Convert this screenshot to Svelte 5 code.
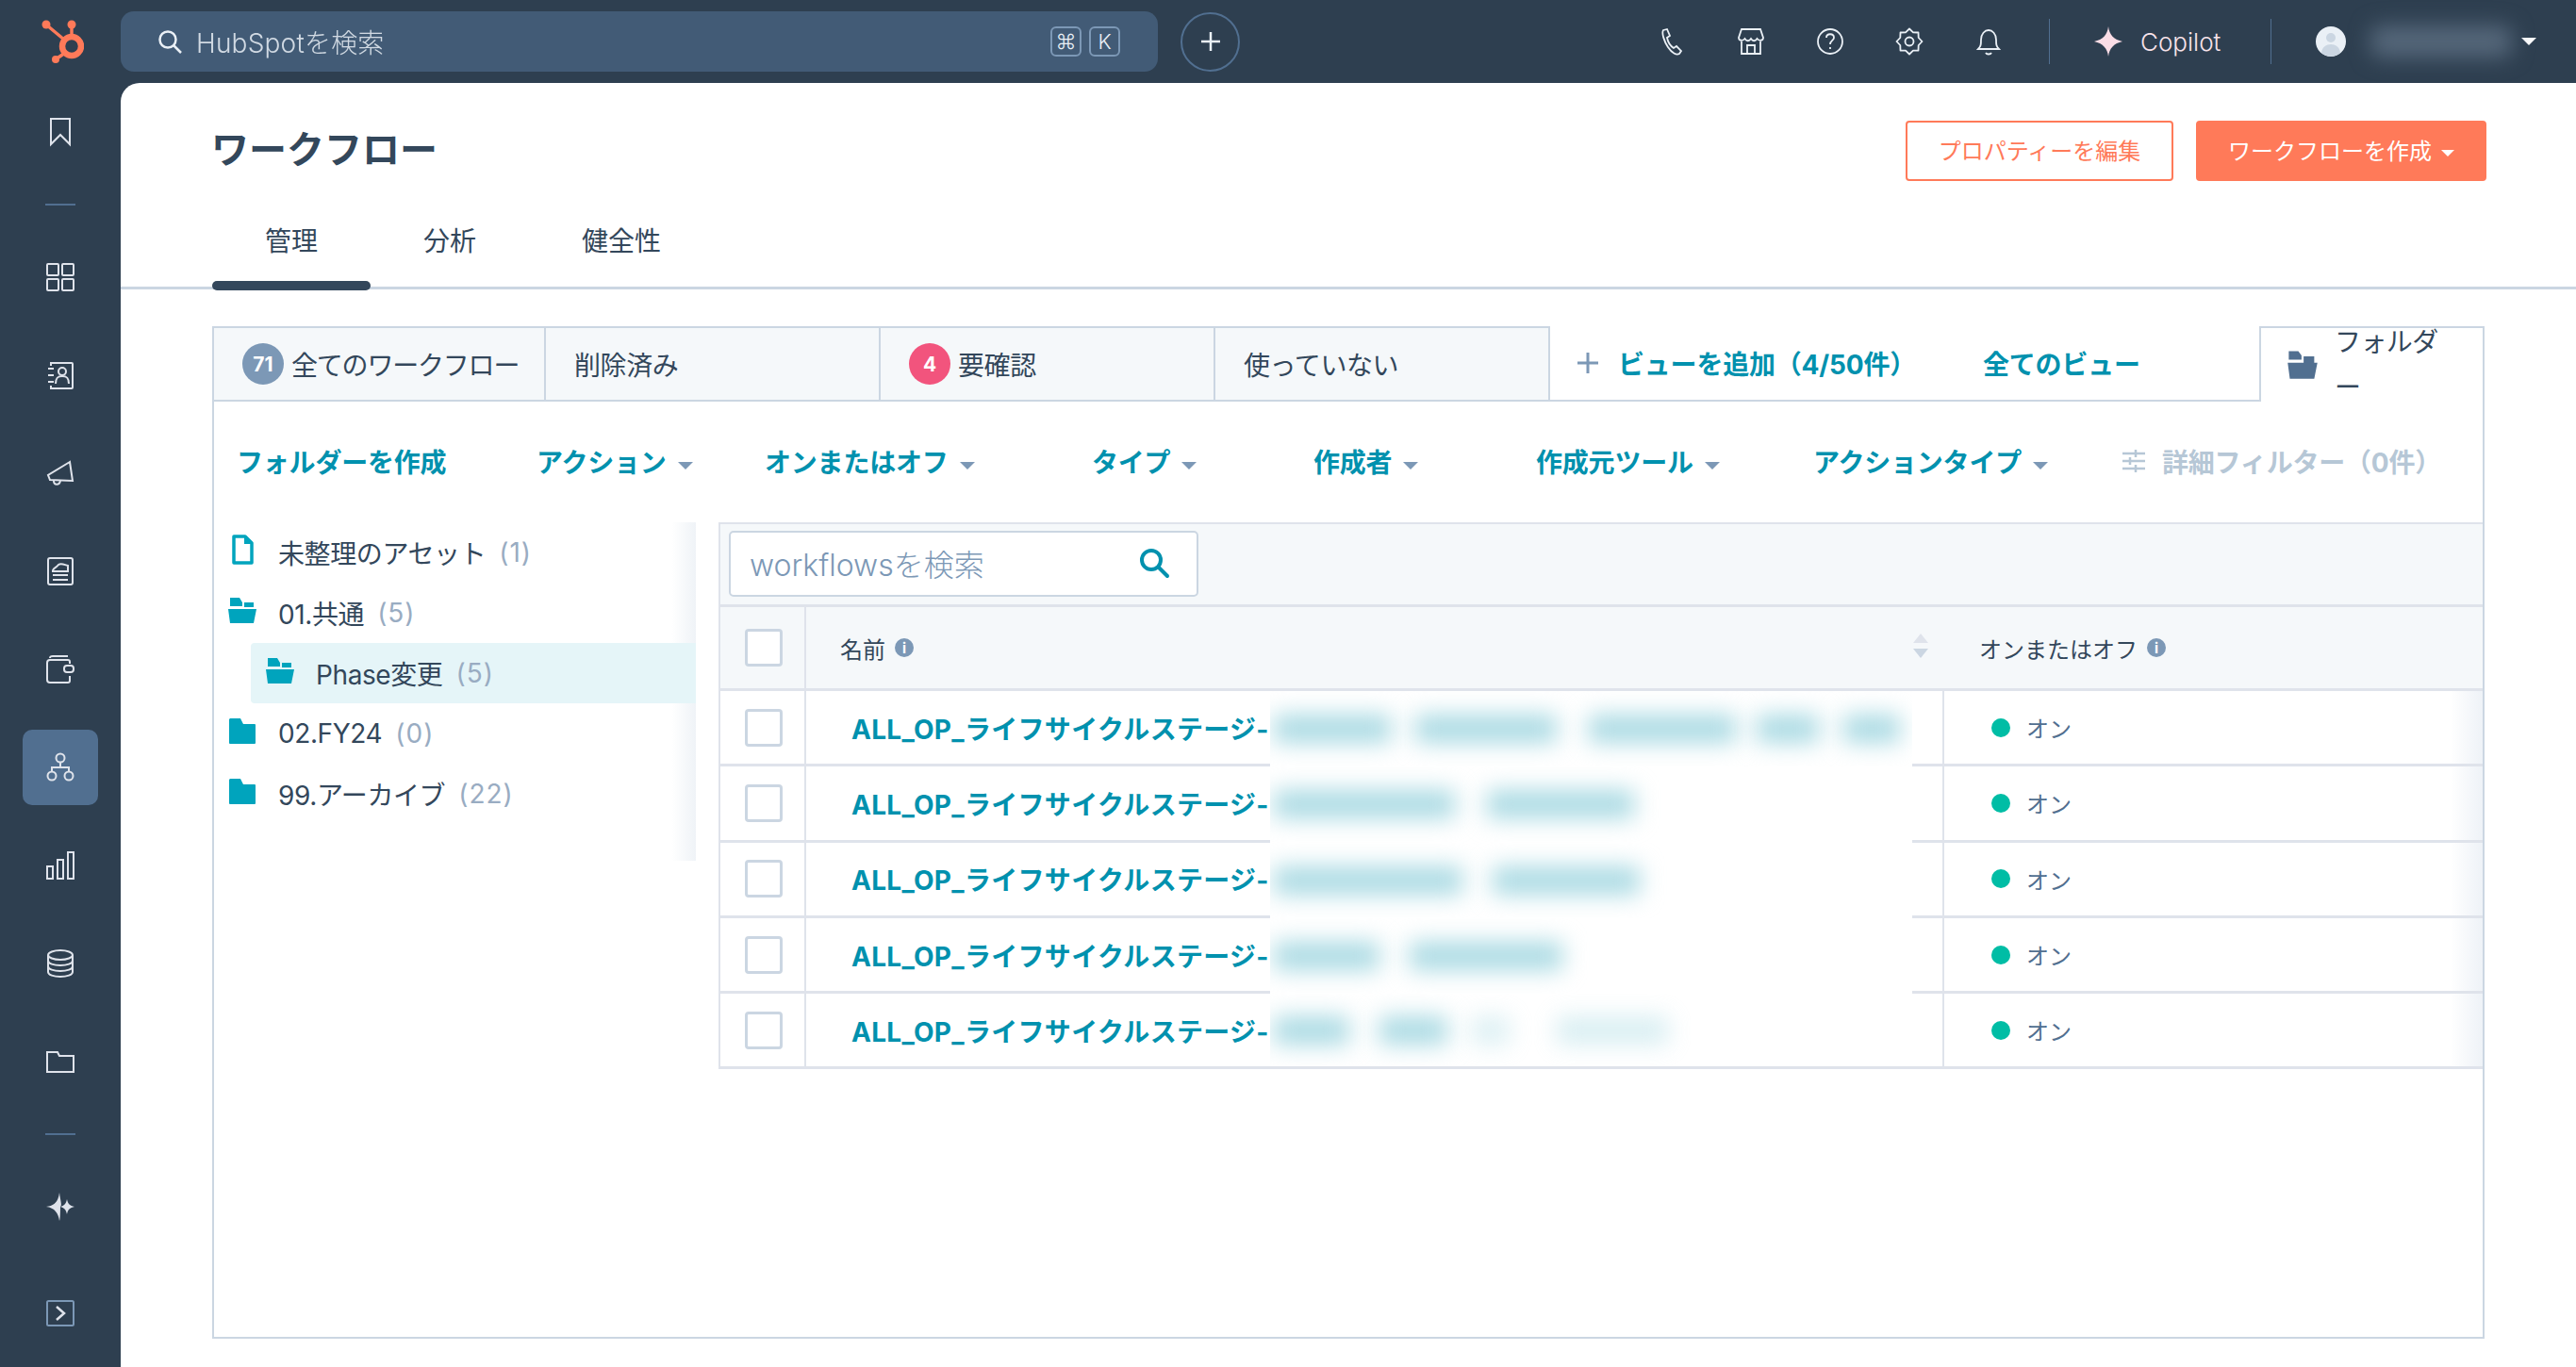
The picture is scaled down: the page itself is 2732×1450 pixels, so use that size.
<script>
	const railTop = ['grid', 'contacts', 'megaphone', 'report', 'wallet', 'workflow', 'bars', 'database', 'folder'];

	// rough gear outline for the settings icon
	function gear() {
		let d = '';
		for (let i = 0; i < 16; i++) {
			const a = (i / 16) * Math.PI * 2;
			const r = i % 2 ? 10.5 : 13.5;
			const x = (16 + r * Math.cos(a)).toFixed(1);
			const y = (16 + r * Math.sin(a)).toFixed(1);
			d += (i ? 'L' : 'M') + x + ' ' + y;
		}
		return d + 'Z';
	}

	const filters = ['アクション', 'オンまたはオフ', 'タイプ', '作成者', '作成元ツール', 'アクションタイプ'];

	const tree = [
		{ label: '未整理のアセット', count: 1, icon: 'file' },
		{ label: '01.共通', count: 5, icon: 'open' },
		{ label: 'Phase変更', count: 5, icon: 'open', active: true },
		{ label: '02.FY24', count: 0, icon: 'closed' },
		{ label: '99.アーカイブ', count: 22, icon: 'closed' }
	];

	// hidden part of each workflow name: blurred chunks [gap, width, opacity]
	const rows = [
		[[4, 124, 1], [26, 150, 1], [34, 156, 1], [22, 66, 1], [26, 60, 1]],
		[[4, 192, 1], [34, 156, 1]],
		[[4, 200, 1], [32, 156, 1]],
		[[4, 112, 1], [32, 162, 1]],
		[[4, 80, 1], [32, 72, 1], [26, 40, 0.4], [50, 118, 0.45]]
	];
</script>

<div class="app">
	<aside class="rail">
		<div class="logo">
			<svg width="46" height="46" viewBox="0 0 46 46" fill="#ff7a59" stroke="#ff7a59">
				<circle cx="33" cy="28" r="10" fill="none" stroke-width="6.5" />
				<path d="M7 6 25 21M33 6v13M26 35 16 42" stroke-width="3.4" fill="none" />
				<circle cx="6" cy="5" r="4.5" stroke="none" />
				<circle cx="33" cy="5" r="4.5" stroke="none" />
				<circle cx="16" cy="42" r="4" stroke="none" />
			</svg>
		</div>
		<div class="rail-item bookmark">
			<svg width="32" height="32" viewBox="0 0 32 32"><path d="M6 2h20v27l-10-10-10 10z" /></svg>
		</div>
		<div class="rail-sep"></div>
		<div class="rail-group">
			{#each railTop as name}
				<div class="rail-item" class:active={name === 'workflow'}>
					<svg width="32" height="32" viewBox="0 0 32 32">
						{#if name === 'grid'}
							<rect x="2" y="2" width="12" height="12" rx="1" /><rect x="18" y="2" width="12" height="12" rx="1" />
							<rect x="2" y="18" width="12" height="12" rx="1" /><rect x="18" y="18" width="12" height="12" rx="1" />
						{:else if name === 'contacts'}
							<path d="M6 6V3h22a1 1 0 0 1 1 1v25a1 1 0 0 1-1 1H6v-3" />
							<path d="M3 9h6M3 16h6M3 23h6" />
							<circle cx="18" cy="12" r="4" /><path d="M11 25c0-7 3-8 7-8s7 1 7 8" />
						{:else if name === 'megaphone'}
							<path d="M26 4 3 18l2 5 24 1z" /><path d="M9 24c0 5 6 5 7 0" />
						{:else if name === 'report'}
							<rect x="3" y="2" width="26" height="28" rx="2" />
							<path d="M8 15c1-3 4-3 6-6 3-2 6 0 10 1v6H8zM8 20h16M8 25h16" />
						{:else if name === 'wallet'}
							<path d="M5 4c0-2 1-2 3-2h16" /><path d="M26 10V8a2 2 0 0 0-2-2H5a3 3 0 0 0-3 3v18a3 3 0 0 0 3 3h19a2 2 0 0 0 2-2v-5" />
							<rect x="20" y="12" width="10" height="7" rx="3" />
						{:else if name === 'workflow'}
							<circle cx="16" cy="6" r="4.5" /><circle cx="7" cy="25" r="4.5" /><circle cx="25" cy="25" r="4.5" />
							<path d="M16 10v6M7 20v-4h18v4" />
						{:else if name === 'bars'}
							<rect x="2" y="17" width="6" height="13" /><rect x="13" y="10" width="6" height="20" /><rect x="24" y="2" width="6" height="28" />
						{:else if name === 'database'}
							<ellipse cx="16" cy="7" rx="13" ry="5" /><path d="M3 7v18c0 3 6 5 13 5s13-2 13-5V7" />
							<path d="M3 13c0 3 6 5 13 5s13-2 13-5M3 19c0 3 6 5 13 5s13-2 13-5" />
						{:else}
							<path d="M2 6h11l2 4h15v17H2z" />
						{/if}
					</svg>
				</div>
			{/each}
		</div>
		<div class="rail-sep"></div>
		<div class="rail-item">
			<svg width="32" height="32" viewBox="0 0 32 32" class="solid">
				<path d="M15 1c1 9 3 13 1 15 0 0 0 14-1 15-1-8-5-14-14-15 9-1 13-6 14-15z" />
				<path d="M23 8c1 5 3 7 8 8-5 1-7 3-8 8-1-5-3-7-7-8 4-1 6-3 7-8z" />
			</svg>
		</div>
		<div class="rail-item expand">
			<svg width="32" height="32" viewBox="0 0 32 32">
				<rect x="2" y="2" width="28" height="26" rx="1.5" class="frame" />
				<path d="M12 8l8 7-8 7" />
			</svg>
		</div>
	</aside>

	<div class="right">
		<header class="topbar">
			<div class="search">
				<svg width="28" height="28" viewBox="0 0 28 28" class="line"><circle cx="12" cy="12" r="8.5" /><path d="M18 18l8 8" /></svg>
				<span class="search-text">HubSpotを検索</span>
				<span class="kbd">⌘</span>
				<span class="kbd">K</span>
			</div>
			<button class="plus" aria-label="追加">
				<svg width="26" height="26" viewBox="0 0 26 26" class="line"><path d="M13 3v20M3 13h20" /></svg>
			</button>
			<div class="top-icons">
				<svg width="32" height="32" viewBox="0 0 32 32" class="line thin"><path d="M7 4l4-1 3 7-3 2c1 5 4 9 7 11l3-2 5 5-2 3c-3 2-8-1-12-7S5 7 7 4z" /></svg>
				<svg width="32" height="32" viewBox="0 0 32 32" class="line thin"><path d="M6 3h20l3 9c0 3-4 4-6.5 1-2 3-4.500 3-6.500 0-2 3-4.500 3-6.500 0-2.500 3-6.500 2-6.500-1zM6 16v13h20V16M12 29v-9h8v9" /></svg>
				<svg width="32" height="32" viewBox="0 0 32 32" class="line thin"><circle cx="16" cy="16" r="13" /><path d="M12 12c0-5 8-5 8 0 0 3-4 3-4 7M16 22v2" /></svg>
				<svg width="32" height="32" viewBox="0 0 32 32" class="line thin"><path d={gear()} stroke-linejoin="round" /><circle cx="16" cy="16" r="4.500" /></svg>
				<svg width="32" height="32" viewBox="0 0 32 32" class="line thin"><path d="M5 24c3-3 3-5 3-10 0-6 4-10 8-10s8 4 8 10c0 5 0 7 3 10zM13 28c1 2 5 2 6 0" /></svg>
			</div>
			<div class="top-sep"></div>
			<div class="copilot">
				<svg width="32" height="32" viewBox="0 0 32 32"><path d="M16 0c1 9 6 14 15 16-9 2-14 7-15 16-1-9-6-14-15-16 9-2 14-7 15-16z" fill="#fbdde6" /></svg>
				<span>Copilot</span>
			</div>
			<div class="top-sep"></div>
			<div class="account">
				<svg width="32" height="32" viewBox="0 0 32 32">
					<circle cx="16" cy="16" r="16" fill="#eaf0f6" /><circle cx="16" cy="12" r="5" fill="#cbd6e2" /><path d="M6 28c1-12 19-12 20 0-5 5-15 5-20 0z" fill="#cbd6e2" />
				</svg>
				<div class="blur-name"></div>
				<span class="caret white"></span>
			</div>
		</header>

		<main class="main">
			<div class="head">
				<h1>ワークフロー</h1>
				<div class="head-actions">
					<button class="btn outline">プロパティーを編集</button>
					<button class="btn solid-btn">ワークフローを作成<span class="caret white small"></span></button>
				</div>
			</div>
			<nav class="tabs">
				<span class="tab current">管理</span>
				<span class="tab">分析</span>
				<span class="tab">健全性</span>
			</nav>

			<section class="box">
				<div class="views">
					<div class="vtab"><span class="badge grey">71</span><span class="tight">全てのワークフロー</span></div>
					<div class="vtab">削除済み</div>
					<div class="vtab"><span class="badge red">4</span>要確認</div>
					<div class="vtab">使っていない</div>
					<div class="view-links">
						<svg width="24" height="24" viewBox="0 0 24 24" class="add-plus"><path d="M12 1v22M1 12h22" /></svg>
						<span class="link add-view">ビューを追加（4/50件）</span>
						<span class="link all-views">全てのビュー</span>
					</div>
					<div class="folder-tab">
						<svg width="36" height="36" viewBox="0 0 32 32" fill="#516f90"><path d="M3 11V3h9l3 4v4zM17 8h10v6H17zM2 14h28l-3 15H4z" /></svg>
						<span class="folder-label">フォルダー</span>
					</div>
				</div>

				<div class="panel">
					<div class="filters">
						<span class="link">フォルダーを作成</span>
						{#each filters as f}
							<span class="link">{f}<span class="caret"></span></span>
						{/each}
						<span class="adv">
							<svg width="28" height="28" viewBox="0 0 28 28"><path d="M2 6h24M2 14h24M2 22h24" /><path d="M16 2v8M10 10v8M16 18v8" /></svg>
							詳細フィルター（0件）
						</span>
					</div>

					<div class="content">
						<div class="tree">
							{#each tree as item}
								<div class="node" class:active={item.active}>
									<svg width="32" height="32" viewBox="0 0 32 32" fill="#00a4bd">
										{#if item.icon === 'file'}
											<path d="M7 2h12l7 7v21H7z" fill="none" stroke="#00a4bd" stroke-width="3.500" stroke-linejoin="round" /><path d="M18 2l8 8h-8z" />
										{:else if item.icon === 'open'}
											<path d="M3 12V3h10l3 5v4zM18 8h10v5H18zM1 15h30l-3 15H3z" />
										{:else}
											<path d="M3 3h11l3 6h12a1 1 0 0 1 1 1v19a1 1 0 0 1-1 1H3a1 1 0 0 1-1-1V4z" />
										{/if}
									</svg>
									<span class="node-label">{item.label}</span>
									<span class="count">({item.count})</span>
								</div>
							{/each}
						</div>

						<div class="table">
							<div class="tsearch">
								<div class="tinput">
									<span>workflowsを検索</span>
									<svg width="34" height="34" viewBox="0 0 34 34" fill="none" stroke="#0091ae" stroke-width="4" stroke-linecap="round"><circle cx="14" cy="14" r="10" /><path d="M22 22l9 9" /></svg>
								</div>
							</div>
							<div class="row header">
								<div class="cell check"><span class="box-check"></span></div>
								<div class="cell name-head">
									<span>名前</span><span class="info">i</span>
									<span class="sort"><i class="up"></i><i class="down"></i></span>
								</div>
								<div class="cell status-head"><span>オンまたはオフ</span><span class="info">i</span></div>
							</div>
							{#each rows as chunks, i}
								<div class="row">
									<div class="cell check"><span class="box-check"></span></div>
									<div class="cell name">
										<span class="wf-name">ALL_OP_ライフサイクルステージ-</span>
										<div class="redact" class:last={i === rows.length - 1}>
											{#each chunks as c}
												<i style="margin-left:{c[0]}px;width:{c[1]}px;opacity:{c[2]}"></i>
											{/each}
										</div>
									</div>
									<div class="cell status"><span class="dot"></span>オン</div>
								</div>
							{/each}
						</div>
					</div>
				</div>
			</section>
		</main>
	</div>
</div>

<style>
	:global(body) {
		margin: 0;
		background: #2e3f50;
	}

	.app {
		display: flex;
		width: 2732px;
		height: 1450px;
		overflow: hidden;
		background: #2e3f50;
		font-family: Inter, "Noto Sans CJK JP", sans-serif;
		font-size: 28px;
		color: #33475b;
	}

	.rail {
		width: 128px;
		flex-shrink: 0;
		display: flex;
		flex-direction: column;
		align-items: center;
	}

	.logo {
		height: 88px;
		display: flex;
		align-items: center;
		padding-left: 4px;
		box-sizing: border-box;
	}

	.rail-group {
		display: flex;
		flex-direction: column;
		gap: 24px;
	}

	.rail-item {
		width: 80px;
		height: 80px;
		display: flex;
		align-items: center;
		justify-content: center;
		border-radius: 10px;
	}

	.rail-item.bookmark {
		margin-top: 12px;
	}

	.rail-item.active {
		background: #516f90;
	}

	.rail-item svg {
		fill: none;
		stroke: #dfe3eb;
		stroke-width: 2;
	}

	.rail-item svg.solid {
		fill: #dfe3eb;
		stroke: none;
	}

	.rail-item.expand {
		margin-top: 34px;
	}

	.rail-item.expand .frame {
		stroke: #7c98b6;
	}

	.rail-item.expand path {
		stroke-width: 2.5;
	}

	.rail-sep {
		height: 74px;
		width: 32px;
		flex-shrink: 0;
		background: linear-gradient(#516f90, #516f90) center / 32px 2px no-repeat;
	}

	.right {
		flex: 1;
		display: flex;
		flex-direction: column;
		min-width: 0;
	}

	.topbar {
		height: 88px;
		flex-shrink: 0;
		display: flex;
		align-items: center;
	}

	.search {
		width: 1100px;
		height: 64px;
		box-sizing: border-box;
		padding: 0 40px 0 38px;
		background: #425b76;
		border-radius: 14px;
		display: flex;
		align-items: center;
		color: #eaf0f6;
		font-weight: 300;
	}

	.search-text {
		margin-left: 14px;
		flex: 1;
		opacity: 0.85;
		letter-spacing: 0.2px;
	}

	.kbd {
		min-width: 33px;
		height: 32px;
		box-sizing: border-box;
		margin-left: 8px;
		border: 2px solid #7c98b6;
		border-radius: 6px;
		display: flex;
		align-items: center;
		justify-content: center;
		font-size: 22px;
	}

	.search svg.line {
		flex-shrink: 0;
	}

	.line {
		fill: none;
		stroke: #eaf0f6;
		stroke-width: 2.5;
	}

	.line.thin {
		stroke-width: 1.8;
	}

	.plus {
		width: 63px;
		height: 63px;
		margin-left: 24px;
		padding: 0;
		border-radius: 50%;
		border: 2px solid #516f90;
		background: none;
		display: flex;
		align-items: center;
		justify-content: center;
	}

	.top-icons {
		margin-left: 442px;
		display: flex;
		gap: 52px;
	}

	.top-sep {
		width: 1px;
		height: 48px;
		background: #516f90;
	}

	.top-icons + .top-sep {
		margin-left: 48px;
	}

	.copilot {
		width: 234px;
		box-sizing: border-box;
		padding-left: 46px;
		display: flex;
		align-items: center;
		gap: 18px;
		color: #f8e3ea;
		font-weight: 300;
		font-size: 26px;
	}

	.account {
		display: flex;
		align-items: center;
		margin-left: 47px;
	}

	.blur-name {
		width: 150px;
		height: 34px;
		margin-left: 26px;
		background: #55677a;
		border-radius: 10px;
		filter: blur(11px);
	}

	.caret {
		display: inline-block;
		width: 0;
		height: 0;
		margin-left: 12px;
		vertical-align: 3px;
		border-left: 8px solid transparent;
		border-right: 8px solid transparent;
		border-top: 8px solid #7c98b6;
	}

	.caret.white {
		border-top-color: #fff;
		margin-left: 10px;
	}

	.caret.small {
		border-left-width: 7px;
		border-right-width: 7px;
		border-top-width: 7px;
	}

	.main {
		flex: 1;
		min-height: 0;
		box-sizing: border-box;
		padding: 40px 97px 30px;
		background: #fff;
		border-top-left-radius: 20px;
		display: flex;
		flex-direction: column;
	}

	.head {
		display: flex;
		justify-content: space-between;
		align-items: center;
		height: 64px;
		flex-shrink: 0;
		margin-right: -2px;
	}

	h1 {
		margin: 0;
		padding-bottom: 8px;
		font-size: 40px;
		font-weight: 700;
		color: #33475b;
		margin-left: -1px;
	}

	.head-actions {
		display: flex;
		gap: 24px;
	}

	.btn {
		height: 64px;
		box-sizing: border-box;
		border-radius: 4px;
		font: inherit;
		font-size: 24px;
		padding: 0 0 4px;
	}

	.btn.outline {
		width: 284px;
		background: #fff;
		border: 2px solid #ff7a59;
		color: #ff7a59;
	}

	.btn.solid-btn {
		width: 308px;
		background: #ff7a59;
		border: 2px solid #ff7a59;
		color: #fff;
	}

	.tabs {
		display: flex;
		margin: 0 -97px;
		padding: 0 97px;
		height: 115px;
		flex-shrink: 0;
		box-sizing: border-box;
		border-bottom: 3px solid #cbd6e2;
	}

	.tab {
		position: relative;
		padding: 11px 56px 0;
		height: 112px;
		display: flex;
		align-items: center;
		box-sizing: border-box;
	}

	.tab.current::after {
		content: "";
		position: absolute;
		left: 0;
		right: 0;
		bottom: -4px;
		height: 10px;
		border-radius: 5px;
		background: #33475b;
	}

	.box {
		flex: 1;
		min-height: 0;
		margin-top: 39px;
		display: flex;
		flex-direction: column;
	}

	.views {
		display: flex;
		height: 80px;
		flex-shrink: 0;
	}

	.vtab {
		width: 355px;
		box-sizing: border-box;
		padding-left: 30px;
		display: flex;
		align-items: center;
		background: #f5f8fa;
		border: 2px solid #cbd6e2;
		border-left: 0;
		letter-spacing: -0.4px;
	}

	.vtab:first-child {
		width: 354px;
		border-left: 2px solid #cbd6e2;
	}

	.tight {
		letter-spacing: -1.2px;
	}

	.badge {
		width: 44px;
		height: 44px;
		flex-shrink: 0;
		margin-right: 8px;
		border-radius: 50%;
		display: flex;
		align-items: center;
		justify-content: center;
		color: #fff;
		font-size: 21px;
		font-weight: 700;
		letter-spacing: 0;
	}

	.badge.grey {
		background: #7c98b6;
	}

	.badge.red {
		background: #f2547d;
	}

	.view-links {
		flex: 1;
		display: flex;
		align-items: center;
		border-bottom: 2px solid #cbd6e2;
		padding-left: 28px;
	}

	.add-plus {
		fill: none;
		stroke: #7c98b6;
		stroke-width: 3;
		margin-right: 20px;
	}

	.link {
		color: #0091ae;
		font-weight: 700;
		letter-spacing: -0.2px;
		white-space: nowrap;
	}

	.all-views {
		margin-left: 71px;
	}

	.folder-tab {
		width: 239px;
		box-sizing: border-box;
		padding-left: 26px;
		display: flex;
		align-items: center;
		gap: 16px;
		background: #fff;
		border: 2px solid #cbd6e2;
		border-bottom: 0;
	}

	.folder-label {
		width: 116px;
		line-height: 48px;
		line-break: anywhere;
		letter-spacing: -0.6px;
	}

	.panel {
		flex: 1;
		min-height: 0;
		border: 2px solid #cbd6e2;
		border-top: 0;
		display: flex;
		flex-direction: column;
	}

	.filters {
		height: 128px;
		flex-shrink: 0;
		box-sizing: border-box;
		padding: 0 0 3px 24px;
		display: grid;
		grid-template-columns: 318px 242px 347px 235px 236px 294px 326px 1fr;
		align-items: center;
	}

	.adv {
		display: flex;
		align-items: center;
		gap: 16px;
		color: #b6c7d6;
		font-weight: 700;
		letter-spacing: -0.2px;
		white-space: nowrap;
	}

	.adv svg {
		fill: none;
		stroke: #b6c7d6;
		stroke-width: 2.5;
	}

	.content {
		display: flex;
		align-items: flex-start;
		gap: 24px;
	}

	.tree {
		width: 511px;
		height: 359px;
		flex-shrink: 0;
		background: linear-gradient(to right, #fff 95%, #eff3f7);
	}

	.node {
		height: 64px;
		box-sizing: border-box;
		padding-left: 14px;
		display: flex;
		align-items: center;
		gap: 22px;
		letter-spacing: -0.4px;
	}

	.node.active {
		margin-left: 39px;
		padding-left: 15px;
		background: #e5f5f8;
		border-radius: 4px 0 0 4px;
	}

	.node svg {
		flex-shrink: 0;
		margin-top: -6px;
	}

	.count {
		color: #99acc2;
		margin-left: -8px;
		letter-spacing: 1px;
	}

	.table {
		flex: 1;
		min-width: 0;
		border-left: 2px solid #dfe3eb;
		border-top: 2px solid #dfe3eb;
	}

	.tsearch {
		height: 88px;
		box-sizing: border-box;
		padding: 7px 0 0 9px;
		background: #f5f8fa;
		border-bottom: 3px solid #dfe3eb;
	}

	.tinput {
		width: 498px;
		height: 70px;
		box-sizing: border-box;
		padding: 0 28px 3px 20px;
		background: #fff;
		border: 2px solid #cbd6e2;
		border-radius: 5px;
		display: flex;
		align-items: center;
		justify-content: space-between;
		color: #7c98b6;
		font-size: 32px;
		font-weight: 300;
	}

	.row {
		display: grid;
		grid-template-columns: 91px 1207px 1fr;
		height: 80.3px;
		box-sizing: border-box;
		border-bottom: 3px solid #dfe3eb;
	}

	.row.header {
		height: 89px;
		background: #f5f8fa;
		font-size: 24px;
	}

	.cell {
		display: flex;
		align-items: center;
		position: relative;
	}

	.check {
		justify-content: center;
		border-right: 2px solid #dfe3eb;
		padding-left: 2px;
	}

	.box-check {
		width: 40px;
		height: 40px;
		box-sizing: border-box;
		background: #fff;
		border: 3px solid #cbd6e2;
		border-radius: 4px;
	}

	.name-head {
		padding-left: 36px;
		gap: 10px;
	}

	.status-head {
		padding-left: 37px;
		gap: 10px;
	}

	.info {
		width: 20px;
		height: 20px;
		border-radius: 50%;
		background: #7c98b6;
		color: #fff;
		font-size: 15px;
		font-weight: 700;
		display: flex;
		align-items: center;
		justify-content: center;
	}

	.sort {
		position: absolute;
		right: 17px;
		top: 28px;
		display: flex;
		flex-direction: column;
		gap: 6px;
	}

	.sort i {
		display: block;
		border-left: 8px solid transparent;
		border-right: 8px solid transparent;
	}

	.sort .up {
		border-bottom: 10px solid #dfe3eb;
	}

	.sort .down {
		border-top: 10px solid #cbd6e2;
	}

	.name {
		padding-left: 48px;
		border-right: 2px solid #dfe3eb;
	}

	.wf-name {
		color: #0091ae;
		font-weight: 700;
		white-space: nowrap;
		letter-spacing: 0.3px;
	}

	.redact {
		position: absolute;
		left: 492px;
		top: 0;
		bottom: -3px;
		width: 681px;
		background: #fff;
		display: flex;
		align-items: center;
		overflow: hidden;
	}

	.redact.last {
		bottom: 0;
	}

	.redact i {
		display: block;
		flex-shrink: 0;
		height: 30px;
		background: #aadae3;
		filter: blur(12px);
	}

	.status {
		padding-left: 50px;
		font-size: 24px;
		color: #516f90;
		background: linear-gradient(to right, #fff 94%, #eef2f7);
	}

	.dot {
		width: 20px;
		height: 20px;
		margin-right: 17px;
		border-radius: 50%;
		background: #00bda5;
	}
</style>
